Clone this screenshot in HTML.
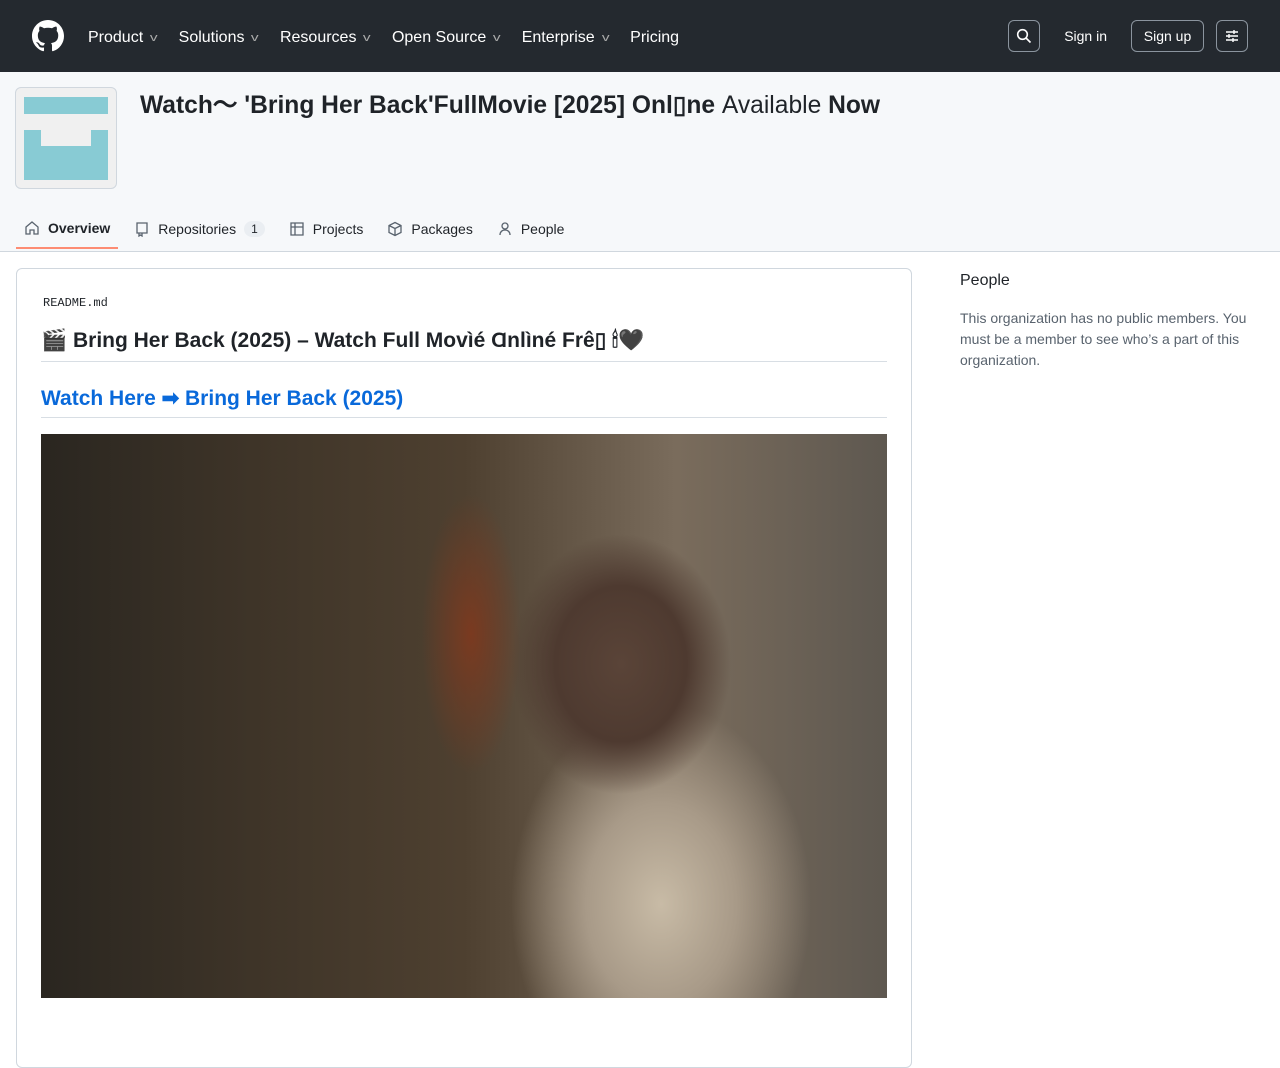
<!DOCTYPE html>
<html><head><meta charset="utf-8"><style>
*{box-sizing:border-box;margin:0;padding:0}
body{width:1280px;height:1024px;overflow:hidden;background:#fff;font-family:"Liberation Sans",sans-serif;color:#1f2328}
.top{height:72px;background:#24292f;display:flex;align-items:center;padding:0 32px;color:#fff}
.nav{display:flex;margin-left:24px;font-size:16px;padding-top:4px}
.nav span{margin-right:22px;display:flex;align-items:center;gap:4px}
.nav i{font-style:normal;font-size:11px;color:#aaa;transform:scaleX(1.4);margin-left:4px}
.right{margin-left:auto;display:flex;align-items:center}
.btn{border:1px solid #8b949e;border-radius:6px;height:32px;display:flex;align-items:center;justify-content:center;font-size:14px}
.hdr{background:#f6f8fa;height:180px;position:relative;border-bottom:1px solid #d0d7de}
.avatar{position:absolute;left:15px;top:15px;width:102px;height:102px;border:1px solid #d0d7de;border-radius:6px;background:#f0f0f0}
.title{position:absolute;left:140px;top:13px;font-size:24.6px;font-weight:bold}
.tabs{position:absolute;left:16px;top:137px;display:flex;font-size:14px}
.tab{display:flex;align-items:center;gap:8px;padding:0 8px;height:40px;margin-right:8px;color:#1f2328}
.tab svg{fill:none;stroke:#59636e;stroke-width:1.3}
.tab.on{font-weight:bold;border-bottom:2px solid #fd8c73}
.cnt{background:#eaeef2;border-radius:10px;padding:1px 7px;font-size:12px;font-weight:normal}
.card{position:absolute;left:16px;top:268px;width:896px;height:800px;border:1px solid #d0d7de;border-radius:6px}
.side{position:absolute;left:960px;top:272px;width:300px}
</style></head><body>
<div class="top">
<svg width="32" height="32" viewBox="0 0 16 16" fill="#fff"><path d="M8 0C3.58 0 0 3.58 0 8c0 3.54 2.290 6.53 5.47 7.59.4.07.55-.17.55-.38 0-.19-.01-.82-.01-1.49-2.01.37-2.53-.49-2.69-.94-.09-.23-.48-.94-.82-1.13-.28-.15-.68-.52-.01-.53.63-.01 1.08.58 1.23.82.72 1.21 1.87.87 2.33.66.07-.52.28-.87.51-1.070-1.78-.2-3.64-.89-3.64-3.95 0-.87.31-1.59.82-2.15-.08-.2-.36-1.02.08-2.12 0 0 .67-.21 2.2.82.64-.18 1.32-.27 2-.27.68 0 1.36.09 2 .27 1.53-1.04 2.2-.82 2.2-.82.44 1.1.16 1.92.08 2.12.51.56.82 1.27.82 2.15 0 3.070-1.87 3.75-3.65 3.95.29.25.54.73.54 1.48 0 1.07-.01 1.93-.01 2.2 0 .21.15.46.55.38A8.013 8.013 0 0016 8c0-4.42-3.58-8-8-8z"/></svg>
<div class="nav"><span>Product<i>v</i></span><span>Solutions<i>v</i></span><span>Resources<i>v</i></span><span>Open Source<i>v</i></span><span>Enterprise<i>v</i></span><span>Pricing</span></div>
<div class="right">
<div class="btn" style="width:32px">
<svg width="16" height="16" viewBox="0 0 16 16" fill="none" stroke="#fff" stroke-width="1.6"><circle cx="6.5" cy="6.5" r="4.8"/><path d="M10 10l4.5 4.5"/></svg></div>
<span style="font-size:14px;margin:0 24px">Sign in</span>
<div class="btn" style="width:73px">Sign up</div>
<div class="btn" style="width:32px;margin-left:12px">
<svg width="16" height="16" viewBox="0 0 16 16" stroke="#fff" stroke-width="1.4"><path d="M2 4h12M2 8h12M2 12h12M10 2v4M5 6v4M9 10v4"/></svg></div>
</div></div>
<div class="hdr">
<div class="avatar"><div style="position:absolute;left:8px;top:9px;width:84px;height:17px;background:#88cbd4"></div><div style="position:absolute;left:8px;top:42px;width:84px;height:50px;background:#88cbd4"></div><div style="position:absolute;left:25px;top:42px;width:50px;height:16px;background:#f0f0f0"></div></div>
<div class="title">Watch〜 'Bring Her Back'FullMovie [2025] Onl▯ne <span style="font-weight:normal">Available</span> Now</div>
<div class="tabs">
<div class="tab on"><svg width="16" height="16" viewBox="0 0 16 16"><path d="M2 7l6-5 6 5v7H10V10H6v4H2z"/></svg>Overview</div>
<div class="tab"><svg width="16" height="16" viewBox="0 0 16 16"><path d="M3 2h10v10H3zM5 12v3l1.5-1 1.5 1v-3"/></svg>Repositories <span class="cnt">1</span></div>
<div class="tab"><svg width="16" height="16" viewBox="0 0 16 16"><path d="M2 2h12v12H2zM6 2v12M2 6h12"/></svg>Projects</div>
<div class="tab"><svg width="16" height="16" viewBox="0 0 16 16"><path d="M8 1.5l6 3v7l-6 3-6-3v-7zM2 4.5l6 3 6-3M8 7.5v7"/></svg>Packages</div>
<div class="tab"><svg width="16" height="16" viewBox="0 0 16 16"><circle cx="8" cy="5" r="3"/><path d="M3 14c0-3 2-5 5-5s5 2 5 5"/></svg>People</div>
</div></div>
<div class="card">
<div style="position:absolute;left:26px;top:27px;font-family:'Liberation Mono',monospace;font-size:12px">README.md</div>
<div style="position:absolute;left:24px;top:59px;font-size:21px;font-weight:bold;width:846px;border-bottom:1px solid #d8dee4;padding-bottom:8px">🎬 Bring Her Back (2025) – Watch Full Movìé Ɑnlìné Frê▯ 🕯🖤</div>
<div style="position:absolute;left:24px;top:117px;font-size:21px;font-weight:bold;color:#0969da;width:846px;border-bottom:1px solid #d8dee4;padding-bottom:6px">Watch Here ➡ Bring Her Back (2025)</div>
<div style="position:absolute;left:24px;top:165px;width:846px;height:564px;background:
radial-gradient(ellipse 110px 130px at 580px 230px,#5a4438 0%,#4e3a30 60%,transparent 100%),
radial-gradient(ellipse 150px 200px at 620px 470px,#c8bba6 0%,#a89a88 50%,transparent 100%),
radial-gradient(ellipse 50px 140px at 430px 200px,#7a3a20 0%,transparent 100%),
linear-gradient(90deg,#2a2620 0%,#3e3428 25%,#4e4030 50%,#7a6c5c 75%,#5e5850 100%)"></div>
</div>
<div class="side">
<div style="font-size:16px">People</div>
<div style="font-size:14px;color:#59636e;line-height:21px;margin-top:18px">This organization has no public members. You must be a member to see who’s a part of this organization.</div>
</div>
</body></html>
